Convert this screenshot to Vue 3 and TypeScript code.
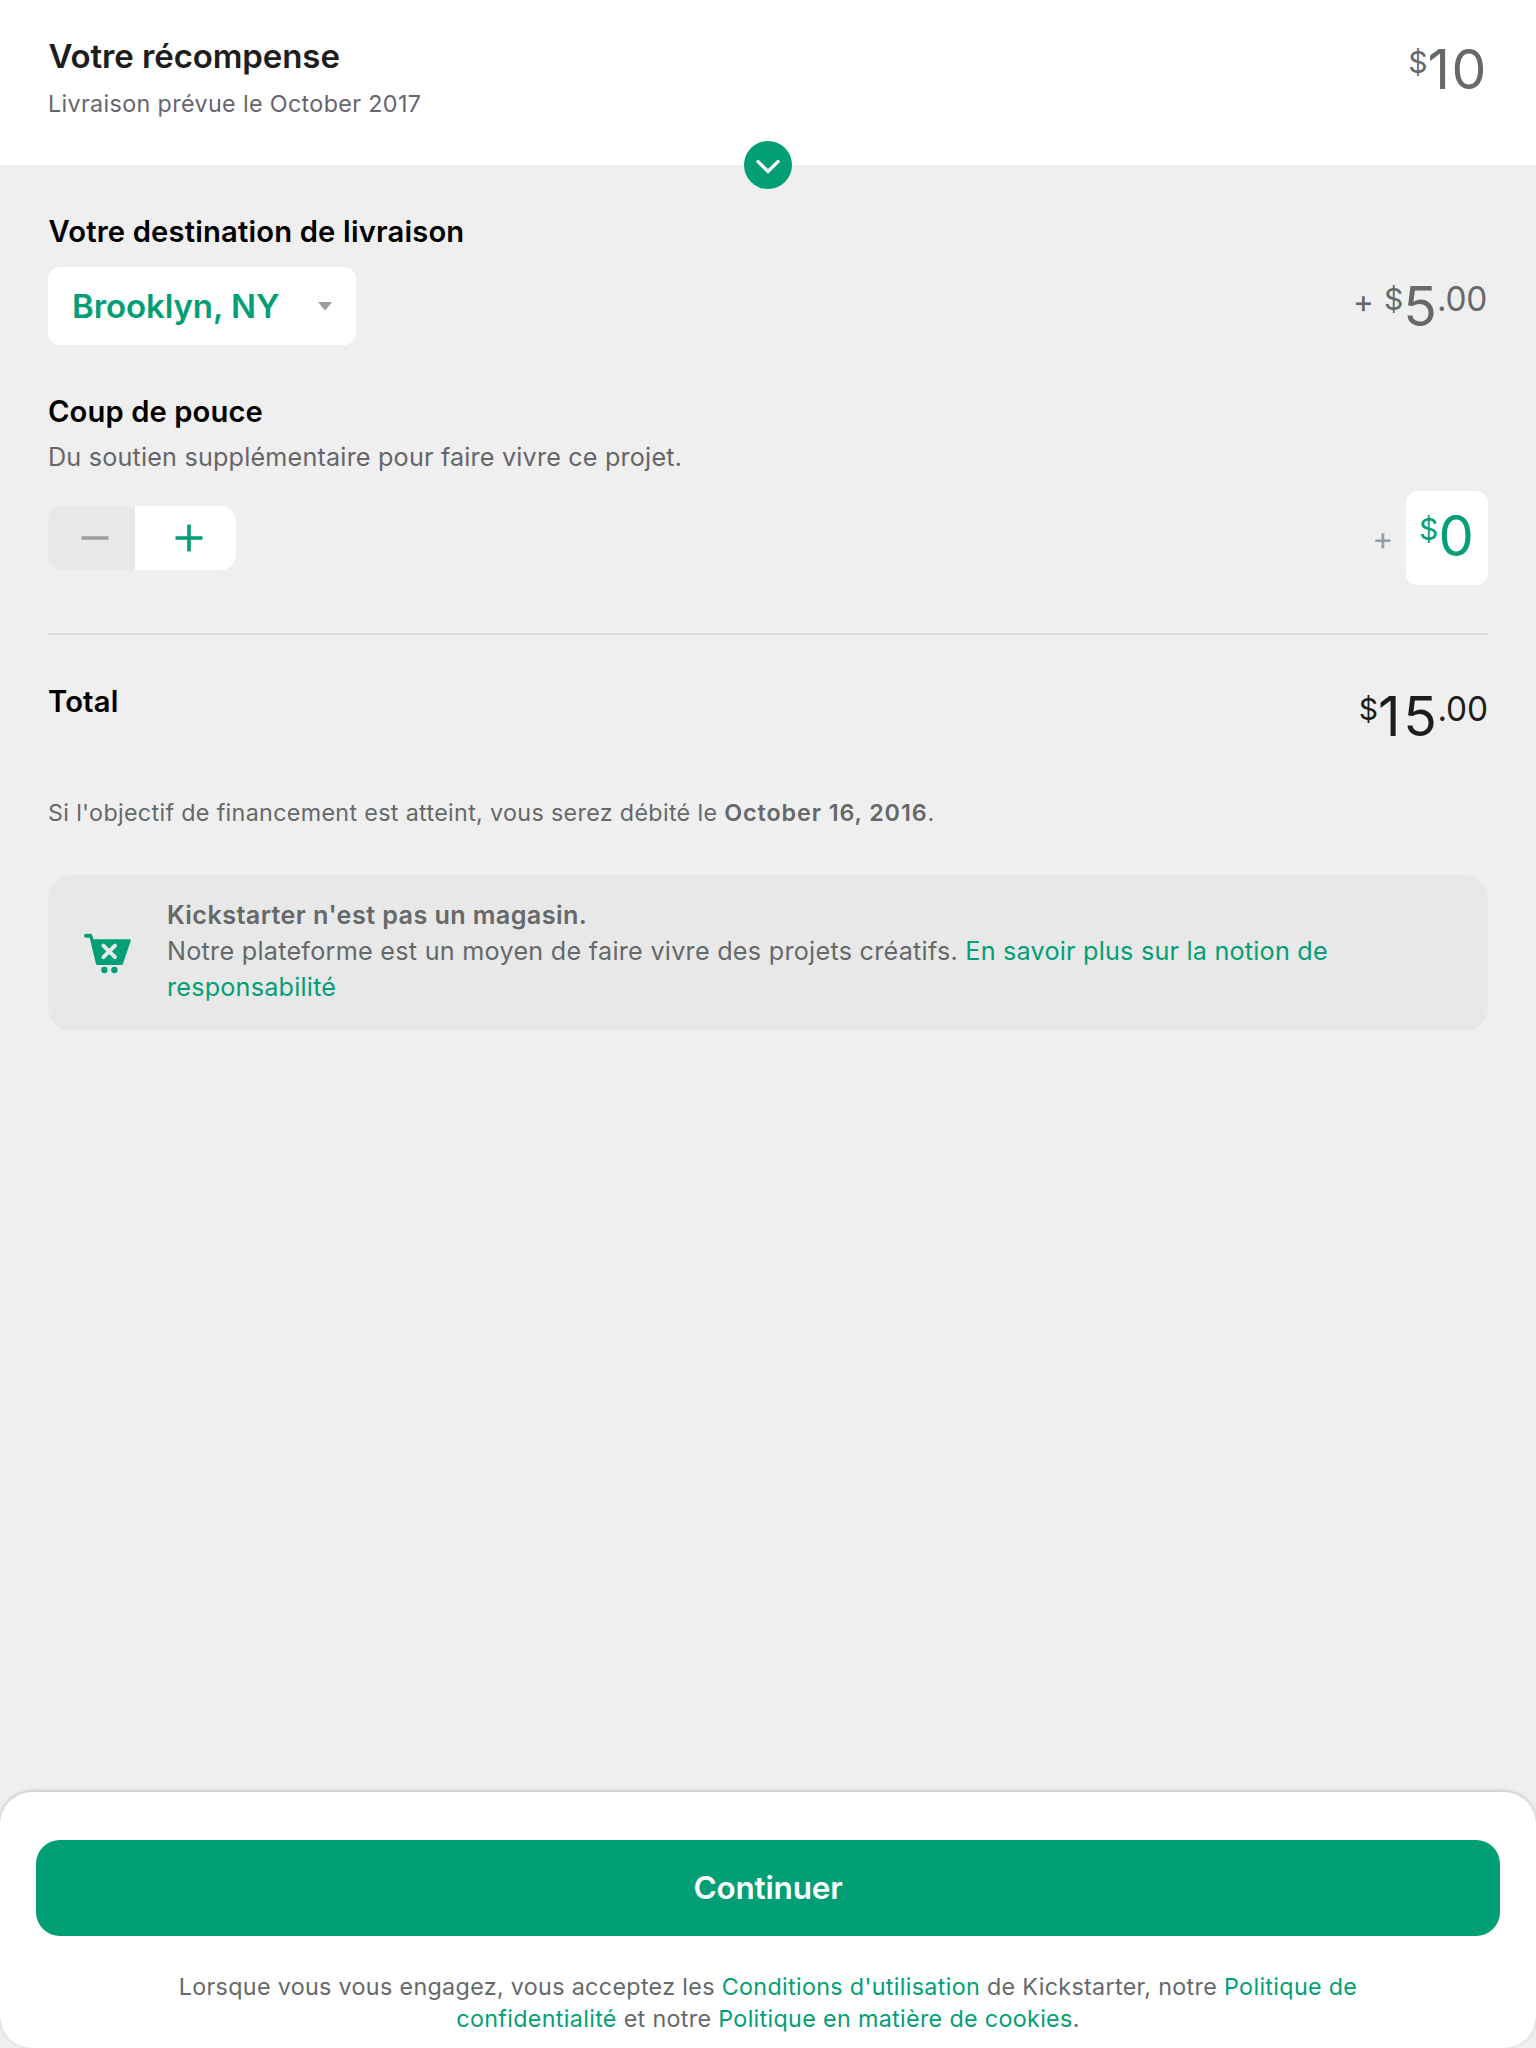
<script setup lang="ts">
import { ref, computed } from 'vue'

const reward = 10
const shipping = 5
const bonus = ref(0)
const total = computed(() => reward + shipping + bonus.value)

function step(delta: number): void {
  bonus.value = Math.max(0, bonus.value + delta)
}
</script>

<template>
  <div class="page">
    <header class="reward">
      <div>
        <h1 class="reward-title">Votre récompense</h1>
        <p class="reward-sub">Livraison prévue le October 2017</p>
      </div>
      <div class="price price-reward"><span class="cur">$</span><span class="int">{{ reward }}</span></div>
      <button class="expand" type="button" aria-label="Détails">
        <svg width="48" height="48" viewBox="0 0 48 48" fill="none">
          <path d="M14 20.6 24 30.4 34 20.6" stroke="#fff" stroke-width="3.4" stroke-linecap="round" stroke-linejoin="miter" />
        </svg>
      </button>
    </header>

    <main class="content">
      <h2 class="label">Votre destination de livraison</h2>
      <div class="row row-shipping">
        <button class="picker" type="button">
          <span>Brooklyn, NY</span>
          <svg width="14" height="8" viewBox="0 0 14 8"><path d="M0 0h14L7.9 7.4q-.9.9-1.8 0Z" fill="#9b9e9e" /></svg>
        </button>
        <div class="price price-shipping"><span class="plus">+</span><span class="cur">$</span><span class="int">{{ shipping }}</span><span class="dec">.00</span></div>
      </div>

      <h2 class="label label-bonus">Coup de pouce</h2>
      <p class="hint">Du soutien supplémentaire pour faire vivre ce projet.</p>
      <div class="row row-bonus">
        <div class="stepper">
          <button class="minus" type="button" aria-label="Moins" @click="step(-1)">
            <svg width="28" height="28" viewBox="0 0 28 28"><path d="M.5 14h27" stroke="#9b9e9e" stroke-width="3.6" /></svg>
          </button>
          <button class="more" type="button" aria-label="Plus" @click="step(1)">
            <svg width="28" height="28" viewBox="0 0 28 28"><path d="M.5 14h27M14 .5v27" stroke="#029f76" stroke-width="3.6" /></svg>
          </button>
        </div>
        <div class="bonus">
          <span class="bonus-plus">+</span>
          <div class="price amount"><span class="cur">$</span><span class="int">{{ bonus }}</span></div>
        </div>
      </div>

      <hr class="rule" />

      <div class="row row-total">
        <h2 class="label label-total">Total</h2>
        <div class="price price-total"><span class="cur">$</span><span class="int">{{ total }}</span><span class="dec">.00</span></div>
      </div>

      <p class="charge">Si l'objectif de financement est atteint, vous serez débité le <b>October 16, 2016</b>.</p>

      <aside class="notice">
        <svg class="cart" width="48" height="42" viewBox="0 0 48 42">
          <path d="M2 .8H6.6Q7.8 .8 8.1 2L9.4 6.2H45.6Q47.3 6.2 46.7 7.9L38.9 31Q38.5 32 37.4 32H13.4Q12.3 32 12 30.9L5.7 4.8H2A2 2 0 0 1 2 .8Z" fill="#029f76" />
          <path d="M19.4 12.6 31 24.2M31 12.6 19.4 24.2" stroke="#e8e8e8" stroke-width="4" stroke-linecap="round" />
          <circle cx="20.4" cy="37" r="3.2" fill="#029f76" />
          <circle cx="30.4" cy="37" r="3.2" fill="#029f76" />
        </svg>
        <p class="notice-text">
          <b>Kickstarter n'est pas un magasin.</b><br />
          <span class="plain">Notre plateforme est un moyen de faire vivre des projets créatifs.</span> <a>En savoir plus sur la notion de<br />responsabilité</a>
        </p>
      </aside>
    </main>

    <footer class="footer">
      <button class="continue" type="button">Continuer</button>
      <p class="legal">
        Lorsque vous vous engagez, vous acceptez les <a>Conditions d'utilisation</a> de Kickstarter, notre <a>Politique de<br />confidentialité</a> et notre <a>Politique en matière de cookies</a>.
      </p>
    </footer>
  </div>
</template>

<style>
html,
body {
  margin: 0;
  background: #efefef;
}
</style>

<style scoped>
.page {
  display: flex;
  flex-direction: column;
  width: 1536px;
  height: 2048px;
  overflow: hidden;
  background: #efefef;
  color: #656969;
  font-family: Inter, "Liberation Sans", sans-serif;
}

h1,
h2,
p {
  margin: 0;
}

button {
  padding: 0;
  border: 0;
  font-family: inherit;
}

b {
  font-weight: 600;
}

a {
  color: #029f76;
}

.reward {
  position: relative;
  display: flex;
  justify-content: space-between;
  align-items: flex-start;
  box-sizing: border-box;
  height: 165px;
  padding: 36px 48px 0;
  background: #fff;
}

.reward-title {
  font-size: 33px;
  line-height: 40px;
  font-weight: 600;
  letter-spacing: -0.1px;
  color: #1d1d1d;
  padding-left: 0.5px;
}

.reward-sub {
  margin-top: 14px;
  font-size: 23.3px;
  line-height: 28px;
  letter-spacing: 0.36px;
  color: #66656c;
}

.expand {
  position: absolute;
  left: 744px;
  bottom: -24px;
  width: 48px;
  height: 48px;
  border-radius: 50%;
  background: #029f76;
}

.expand svg,
.picker svg,
.stepper svg {
  display: block;
}

.price {
  font-size: 55.3px;
  line-height: 60px;
  height: 60px;
  white-space: nowrap;
}

.cur {
  font-size: 30.2px;
  line-height: 0;
  vertical-align: 16px;
}

.dec {
  font-size: 33.4px;
  line-height: 0;
  vertical-align: 15px;
  letter-spacing: -0.3px;
}

.price-reward {
  margin-top: 3px;
}

.price-reward .int {
  letter-spacing: 1.5px;
}

.content {
  padding: 49px 48px 0;
}

.label {
  font-size: 29.2px;
  line-height: 36px;
  font-weight: 600;
  letter-spacing: 0.17px;
  color: #000;
  padding-left: 0.5px;
}

.label-bonus {
  margin-top: 49px;
  letter-spacing: 0.09px;
  padding-left: 0;
}

.label-total {
  margin-top: 1px;
  padding-left: 0;
}

.row {
  display: flex;
  justify-content: space-between;
  align-items: center;
}

.row-shipping {
  margin-top: 17px;
}

.picker {
  display: flex;
  align-items: center;
  justify-content: space-between;
  box-sizing: border-box;
  width: 308px;
  height: 78px;
  padding: 0 24px;
  border-radius: 12px;
  background: #fff;
  color: #029f76;
  font-size: 33px;
  font-weight: 600;
  letter-spacing: -0.08px;
}

.price-shipping {
  margin-right: 1px;
}

.plus {
  font-size: 32px;
  line-height: 0;
  vertical-align: 13.5px;
  margin-right: 10px;
}

.hint {
  margin-top: 11px;
  font-size: 25.2px;
  line-height: 32px;
  letter-spacing: 0.18px;
  color: #66656c;
}

.row-bonus {
  margin-top: 18px;
}

.stepper {
  display: flex;
  width: 188px;
  height: 64px;
  border-radius: 16px;
  overflow: hidden;
}

.stepper button {
  display: flex;
  align-items: center;
}

.minus {
  width: 87px;
  padding-left: 33px;
  background: #e8e8e8;
}

.more {
  flex: 1;
  padding-left: 40px;
  background: #fff;
}

.bonus {
  display: flex;
  align-items: center;
}

.bonus-plus {
  margin-right: 12.5px;
  font-size: 32px;
  line-height: 40px;
  padding-top: 2px;
  color: #9b9e9e;
}

.amount {
  box-sizing: border-box;
  width: 82px;
  height: 94px;
  padding: 15px 0 0 13px;
  border-radius: 12px;
  background: #fff;
  color: #029f76;
}

.amount .int {
  font-size: 56px;
}

.rule {
  height: 2px;
  margin: 48px 0;
  border: 0;
  background: #dcdcdc;
}

.row-total {
  align-items: flex-start;
}

.price-total {
  margin-top: 3px;
  color: #1d1d1d;
}

.price-total .int {
  letter-spacing: 2.6px;
  margin-right: -2px;
}

.price-total .dec {
  letter-spacing: -0.1px;
}

.charge {
  margin-top: 53px;
  font-size: 23.3px;
  line-height: 28px;
  letter-spacing: 0.33px;
}

.charge b {
  letter-spacing: 0.92px;
}

.notice {
  display: flex;
  align-items: center;
  box-sizing: border-box;
  height: 156px;
  margin-top: 48px;
  padding: 0 36px;
  border-radius: 24px;
  background: #e8e8e8;
}

.cart {
  flex: none;
  margin-top: 2px;
  margin-right: 35px;
}

.notice-text {
  margin-top: -4px;
  font-size: 25.2px;
  line-height: 36px;
  letter-spacing: 0.21px;
  white-space: nowrap;
}

.notice-text b {
  letter-spacing: 0.4px;
}

.plain {
  letter-spacing: 0.26px;
}

.footer {
  box-sizing: border-box;
  height: 256px;
  margin-top: auto;
  padding: 48px 36px 0;
  border-radius: 32px;
  background: #fff;
  box-shadow: 0 -1px 4px rgba(0, 0, 0, 0.2);
}

.continue {
  display: block;
  width: 100%;
  height: 96px;
  padding-bottom: 2px;
  border-radius: 24px;
  background: #029f76;
  color: #fff;
  font-size: 31.5px;
  font-weight: 600;
  letter-spacing: -0.2px;
}

.legal {
  margin-top: 35px;
  font-size: 23.3px;
  line-height: 32px;
  letter-spacing: 0.33px;
  text-align: center;
  white-space: nowrap;
}
</style>
